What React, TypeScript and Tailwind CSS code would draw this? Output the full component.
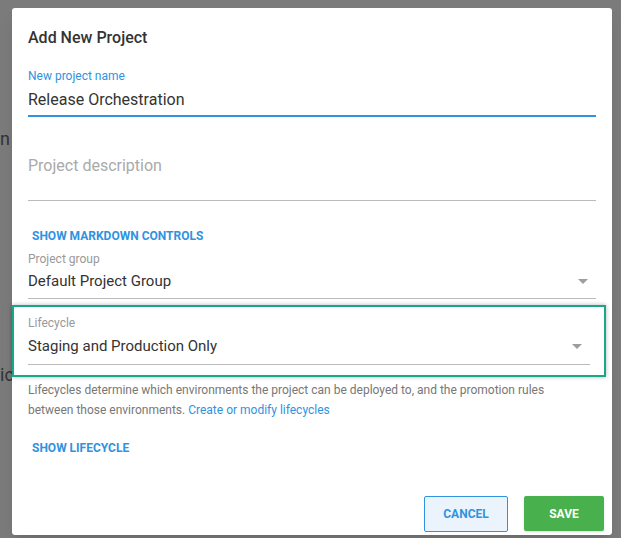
import React from "react";

const Arrow = () => (
  <svg width="10" height="5" viewBox="0 0 10 5" className="mr-2">
    <path d="M0 0 L10 0 L5 5 Z" fill="#9e9e9e" />
  </svg>
);

export default function App() {
  return (
    <div
      className="relative w-[621px] h-[538px] bg-[#7b7b7b] overflow-hidden"
      style={{ fontFamily: "Roboto, 'Liberation Sans', sans-serif" }}
    >
      <div className="absolute left-0 top-[125px] text-[18px] text-[#333]">n</div>
      <div className="absolute left-0 top-[361px] text-[18px] text-[#333]">ic</div>
      <div className="relative ml-3 mt-2 w-[600px] h-[527px] bg-white rounded-[3px] shadow-lg">
        <div className="px-4 pt-[20px] text-[16px] font-medium text-[#333] leading-5">Add New Project</div>
        <div className="px-4 mt-[20px]">
          <div className="text-[12px] text-[#2f93e0] leading-4">New project name</div>
          <div className="text-[16px] text-[#333] leading-5 mt-[6px]">Release Orchestration</div>
          <div className="h-[2px] bg-[#2f93e0] mt-[5px]" />
        </div>
        <div className="px-4 mt-[39px]">
          <div className="text-[16px] text-[#aaa] leading-5">Project description</div>
          <div className="h-px bg-[#bbb] mt-[24px]" />
        </div>
        <div className="px-5 mt-[27px] text-[12px] font-bold text-[#2f93e0] leading-4">SHOW MARKDOWN CONTROLS</div>
        <div className="px-4 mt-[7px]">
          <div className="text-[12px] text-[#999] leading-4">Project group</div>
          <div className="flex items-center justify-between mt-[4px]">
            <span className="text-[15px] text-[#333] leading-5">Default Project Group</span>
            <Arrow />
          </div>
          <div className="h-px bg-[#bbb] mt-[7px]" />
        </div>
        <div className="mt-[6px] w-[594px] border-2 border-[#17a88a] px-[14px] pt-[8px] pb-[10px] shadow-[0_0_4px_rgba(0,0,0,0.3)]">
          <div className="text-[12px] text-[#999] leading-4">Lifecycle</div>
          <div className="flex items-center justify-between mt-[5px]">
            <span className="text-[15px] text-[#333] leading-5">Staging and Production Only</span>
            <Arrow />
          </div>
          <div className="h-px bg-[#bbb] mt-[8px]" />
        </div>
        <div className="px-4 mt-[3px] max-w-[560px] text-[12px] text-[#777] leading-5">
          Lifecycles determine which environments the project can be deployed to, and the promotion rules
          between those environments. <span className="text-[#2f93e0]">Create or modify lifecycles</span>
        </div>
        <div className="px-5 mt-[20px] text-[12px] font-bold text-[#2f93e0] leading-4">SHOW LIFECYCLE</div>
        <div className="absolute right-2 bottom-[3px] flex gap-4">
          <button className="w-[84px] h-[36px] bg-[#ebf3fc] border border-[#2f93e0] rounded-[2px] text-[12px] font-bold text-[#2f93e0]">
            CANCEL
          </button>
          <button className="w-[80px] h-[35px] bg-[#48b14d] rounded-[2px] text-[12px] font-bold text-white shadow">
            SAVE
          </button>
        </div>
      </div>
    </div>
  );
}
